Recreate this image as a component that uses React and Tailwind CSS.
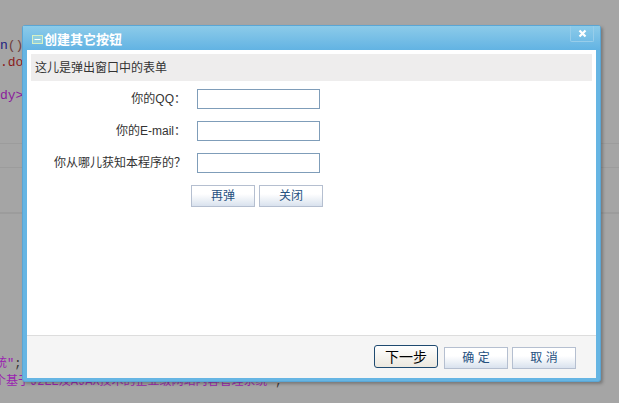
const font = { fontFamily: '"Liberation Sans", "Noto Sans CJK SC", sans-serif' };

function FormRow({ label }) {
  return (
    <div className="flex items-center h-[20px] mb-[12px]">
      <label className="w-[155px] text-right text-[12px] leading-none text-[#333]">{label}</label>
      <input className="ml-[11px] w-[123px] h-[20px] bg-white border border-[#7f9db9] outline-none" />
    </div>
  );
}

function FlatButton({ children, className = '' }) {
  return (
    <button className={`w-[64px] h-[22px] border border-[#b5bfd0] bg-gradient-to-b from-white from-40% to-[#d9e2ee] text-[12px] leading-none text-[#25507f] ${className}`}>
      {children}
    </button>
  );
}

function Dialog() {
  return (
    <div className="absolute left-[22px] top-[25px] w-[579px] h-[357px] flex flex-col rounded-[3px] bg-[#66b5e3] border border-[#5ba6d4] shadow-[2px_2px_3px_rgba(60,60,60,0.4)]">
      {/* Title bar */}
      <div className="h-[24px] flex items-center justify-between pl-[9px] pr-[6px] bg-gradient-to-b from-[#8ccbe9] to-[#62b3e3]">
        <div className="flex items-center gap-[1px] mt-[3px]">
          <svg width="11" height="9" viewBox="0 0 11 9" fill="none">
            <rect x="0.5" y="0.5" width="10" height="8" fill="#8fcfe0" stroke="#d6f0c4" />
            <rect x="2.5" y="4" width="6" height="1" fill="#ffffff" />
          </svg>
          <span className="text-[13px] leading-none font-bold text-white">创建其它按钮</span>
        </div>
        <div className="self-start w-[24px] h-[16px] flex items-center justify-center rounded-b-[2px] border border-t-0 border-[#97cdea]">
          <svg width="9" height="9" viewBox="0 0 9 9">
            <path d="M1.5 1.5 L7.5 7.5 M7.5 1.5 L1.5 7.5" stroke="#ffffff" strokeWidth="2.2" />
          </svg>
        </div>
      </div>

      {/* Body */}
      <div className="flex-1 mx-[4px] mb-[3px] flex flex-col bg-white">
        <div className="flex-1 pt-[4px] px-[4px]">
          <div className="h-[27px] flex items-center pl-[4px] bg-[#eeeded] text-[12px] leading-none text-[#333]">
            这儿是弹出窗口中的表单
          </div>
          <div className="mt-[8px]">
            <FormRow label="你的QQ：" />
            <FormRow label="你的E-mail：" />
            <FormRow label="你从哪儿获知本程序的？" />
          </div>
          <div className="flex gap-[4px] ml-[160px]">
            <FlatButton>再弹</FlatButton>
            <FlatButton>关闭</FlatButton>
          </div>
        </div>

        {/* Footer */}
        <div className="h-[43px] flex justify-end items-start pt-[9px] pr-[20px] gap-[4px] bg-[#f5f5f5] border-t border-[#dddddd]">
          <button className="w-[64px] h-[23px] mr-[2px] rounded-[3px] border border-[#1f4a70] bg-gradient-to-b from-white to-[#ece8df] text-[14px] leading-none text-black">
            下一步
          </button>
          <FlatButton className="mt-[2px]">确 定</FlatButton>
          <FlatButton className="mt-[2px]">取 消</FlatButton>
        </div>
      </div>
    </div>
  );
}

export default function App() {
  return (
    <div className="relative w-[619px] h-[403px] overflow-hidden bg-[#a5a5a5]" style={font}>
      {/* Dimmed page behind the dialog */}
      <div className="h-[403px] flex flex-col text-[13px] leading-[17px] font-['Liberation_Mono','Noto_Sans_CJK_SC',monospace]">
        <div className="mt-[37px] text-[#1d1d80]">n<span className="text-[#6d4040]">()</span></div>
        <div className="text-[#8a1c1c]">.doc</div>
        <div className="mt-[16px] text-[#8a1c9c]">dy&gt;</div>
        <div className="mt-[39px] h-[1px] bg-[#9c9c9c]" />
        <div className="mt-[23px] h-[1px] bg-[#9c9c9c]" />
        <div className="mt-[44px] h-[2px] bg-[#9c9c9c]" />
        <div className="mt-[142px] ml-[-5px] text-[12px] text-[#9a1fb0]">统"<span className="text-[#333]">;</span></div>
        <div className="mt-[1px] ml-[-6px] whitespace-nowrap text-[12px] text-[#9a1fb0]">个基于J2EE及AJAX技术的企业级网站内容管理系统"<span className="text-[#333]">;</span></div>
      </div>
      <Dialog />
    </div>
  );
}
